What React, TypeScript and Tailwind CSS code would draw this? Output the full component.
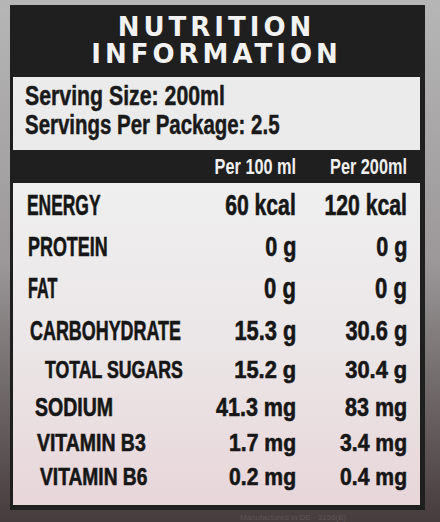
import React from 'react';

type Row = {
  label: string;
  per100: string;
  per200: string;
  rowCls: string;
  labelCls: string;
  valueCls: string;
};

// sizes drift row by row because the label was photographed at an angle
const rows: Row[] = [
  { label: 'ENERGY', per100: '60 kcal', per200: '120 kcal', rowCls: 'h-[41px] pl-[14px]', labelCls: 'text-[29px] scale-x-[0.6]', valueCls: 'text-[29px] scale-x-[0.73]' },
  { label: 'PROTEIN', per100: '0 g', per200: '0 g', rowCls: 'h-[42px] pl-[15px]', labelCls: 'text-[28px] scale-x-[0.64]', valueCls: 'text-[28px] scale-x-[0.77]' },
  { label: 'FAT', per100: '0 g', per200: '0 g', rowCls: 'h-[42px] pl-[15px]', labelCls: 'text-[29px] scale-x-[0.56]', valueCls: 'text-[29px] scale-x-[0.76]' },
  { label: 'CARBOHYDRATE', per100: '15.3 g', per200: '30.6 g', rowCls: 'h-[41px] pl-[17px]', labelCls: 'text-[28px] scale-x-[0.64]', valueCls: 'text-[28px] scale-x-[0.78]' },
  { label: 'TOTAL SUGARS', per100: '15.2 g', per200: '30.4 g', rowCls: 'h-[38px] pl-[32px]', labelCls: 'text-[23px] scale-x-[0.77]', valueCls: 'text-[23px] scale-x-[0.95]' },
  { label: 'SODIUM', per100: '41.3 mg', per200: '83 mg', rowCls: 'h-[37px] pl-[22px]', labelCls: 'text-[25px] scale-x-[0.78]', valueCls: 'text-[25px] scale-x-[0.86]' },
  { label: 'VITAMIN B3', per100: '1.7 mg', per200: '3.4 mg', rowCls: 'h-[34px] pl-[24px]', labelCls: 'text-[24px] scale-x-[0.81]', valueCls: 'text-[24px] scale-x-[0.88]' },
  { label: 'VITAMIN B6', per100: '0.2 mg', per200: '0.4 mg', rowCls: 'h-[33px] pl-[27px]', labelCls: 'text-[24px] scale-x-[0.8]', valueCls: 'text-[24px] scale-x-[0.88]' },
];

export default function App() {
  return (
    <div className="w-[440px] h-[522px] overflow-hidden bg-gradient-to-b from-[#b6b6b6] via-[#9c9899] to-[#463c3d] pl-[10px] pr-[15px] pt-[5px] font-['Liberation_Sans',Arial,sans-serif]">
      <div className="h-[505px] bg-[#1f1f1f] pl-[3px] pr-[5px] flex flex-col">
        {/* title */}
        <div className="h-[72px] pt-[9px] flex flex-col items-center text-[#f2f2f2] font-['DejaVu_Sans',sans-serif] font-bold text-[26px] leading-[27px] tracking-[4px]">
          <span>NUTRITION</span>
          <span>INFORMATION</span>
        </div>

        {/* serving info */}
        <div className="h-[73px] bg-[#ebebeb] pt-[4px] pl-[12px] flex flex-col text-[#1a1a1a] font-bold text-[28px] leading-[29px] [-webkit-text-stroke:0.5px_#1a1a1a]">
          <span className="inline-block w-max origin-left scale-x-[0.76]">Serving Size: 200ml</span>
          <span className="inline-block w-max origin-left scale-x-[0.73]">Servings Per Package: 2.5</span>
        </div>

        {/* column headings */}
        <div className="h-[33px] flex items-center pr-[13px] text-[#f0f0f0] font-bold text-[22px]">
          <div className="flex-1" />
          <div className="w-[110px] flex justify-end">
            <span className="inline-block origin-right scale-x-[0.74] whitespace-nowrap">Per 100 ml</span>
          </div>
          <div className="w-[111px] flex justify-end">
            <span className="inline-block origin-right scale-x-[0.74] whitespace-nowrap">Per 200ml</span>
          </div>
        </div>

        {/* table */}
        <div className="flex-1 mb-[5px] bg-gradient-to-b from-[#efefef] via-[#ebe6e7] to-[#e8d6d9] pt-[2px] pr-[13px] text-[#161616] font-bold [-webkit-text-stroke:0.6px_#161616]">
          {rows.map((r) => (
            <div key={r.label} className={`flex items-center ${r.rowCls}`}>
              <div className="flex-1 min-w-0">
                <span className={`inline-block origin-left whitespace-nowrap ${r.labelCls}`}>{r.label}</span>
              </div>
              <div className="w-[110px] shrink-0 flex justify-end">
                <span className={`inline-block origin-right whitespace-nowrap ${r.valueCls}`}>{r.per100}</span>
              </div>
              <div className="w-[111px] shrink-0 flex justify-end">
                <span className={`inline-block origin-right whitespace-nowrap ${r.valueCls}`}>{r.per200}</span>
              </div>
            </div>
          ))}
        </div>
      </div>
      <div className="pl-[230px] pt-[3px] text-[8px] leading-[10px] text-[#5e5354]">Manufactured in DE · 3156(B)</div>
    </div>
  );
}
